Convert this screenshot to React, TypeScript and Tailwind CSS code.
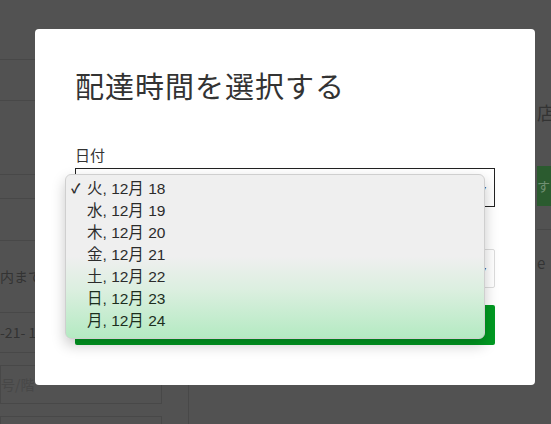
import React from 'react';

const days = ['火', '水', '木', '金', '土', '日', '月'];

const font = { fontFamily: '"Liberation Sans", "Noto Sans CJK JP", sans-serif' };

const App = () => {
  return (
    <div
      className="relative h-[424px] w-[551px] overflow-hidden bg-[#525252] text-[#353535]"
      style={{ fontFamily: '"Noto Sans CJK JP", "Noto Sans", sans-serif' }}
    >
      {/* Page behind the overlay */}
      <div className="flex h-full">
        <div className="w-[162px] shrink-0">
          <div className="h-[60px] border-b border-[#484848]" />
          <div className="h-[41px] border-b border-[#484848]" />
          <div className="h-[74px] border-b border-[#484848]" />
          <div className="h-[24px] border-b border-[#484848]" />
          <div className="h-[42px] border-b border-[#484848]" />
          <div className="flex h-[72px] items-center border-b border-[#484848] text-[14px] text-[#333]">
            内までお届けします
          </div>
          <div className="flex h-[40px] items-center border-b border-[#484848] text-[14px] text-[#333]">
            -21- 1
          </div>
          <div className="h-[12px]" />
          <div className="flex h-[39px] items-center border border-[#484848] text-[14px] text-[#474747]">
            号/階
          </div>
          <div className="mt-[12px] h-[20px] border border-[#484848]" />
        </div>
        <div className="w-[26px] shrink-0" />
        <div className="flex flex-1 flex-col">
          <div className="h-[385px]" />
          <div className="flex-1 border-l border-[#484848]" />
        </div>
        <div className="w-[16px] shrink-0 overflow-hidden pl-[2px]">
          <div className="h-[100px]" />
          <div className="whitespace-nowrap text-[18px] leading-[24px] text-[#333]">店</div>
          <div className="h-[42px]" />
          <div className="flex h-[40px] items-center bg-[#2b5b2f] text-[13px] text-[#6f8f72]">す</div>
          <div className="h-[24px] border-b border-[#484848]" />
          <div className="pt-[22px] text-[15px] text-[#333]">e</div>
        </div>
      </div>

      {/* Modal */}
      <div className="absolute left-[35px] top-[29px] h-[356px] w-[500px] rounded-[4px] bg-white px-[40px] pt-[36px]">
        <h1 className="text-[29px] font-normal leading-[40px] tracking-[1px] text-[#333]">
          配達時間を選択する
        </h1>
        <div className="mt-[40px] text-[15px] leading-[20px] text-[#333]">日付</div>
        <div className="mt-[3px] flex h-[39px] items-center justify-end border border-[#222] pr-[8px]">
          <span className="text-[8px] text-[#444]">▾</span>
        </div>
        <div className="mt-[20px] text-[15px] leading-[20px] text-[#333]">時間</div>
        <div className="mt-[2px] flex h-[39px] items-center justify-end rounded-[2px] border border-[#ddd] pr-[8px]">
          <span className="text-[8px] text-[#444]">▾</span>
        </div>
        <div className="mt-[17px] h-[40px] rounded-[2px] bg-[#019a22]" />

        {/* Native dropdown menu */}
        <div
          className="absolute left-[30px] top-[145px] w-[420px] rounded-[6px] border border-[#cfcfcf] bg-[linear-gradient(to_bottom,#efefef_0%,#efefef_50%,#dcefe0_70%,#b4eac2_100%)] pb-[6px] pt-[3px] shadow-[0_6px_14px_rgba(0,0,0,0.22)]"
          style={font}
        >
          {days.map((d, i) => (
            <div key={d} className="flex h-[22px] items-center text-[15.5px] leading-[20px] text-[#2b2b2b]">
              <span className="w-[21px] pl-[5px] text-[13px] font-bold">{i === 0 ? '✓' : ''}</span>
              <span className={i > 4 ? 'text-[#1c2e1e]' : ''}>
                {d}, 12月 {18 + i}
              </span>
            </div>
          ))}
        </div>
      </div>
    </div>
  );
};

export default App;
